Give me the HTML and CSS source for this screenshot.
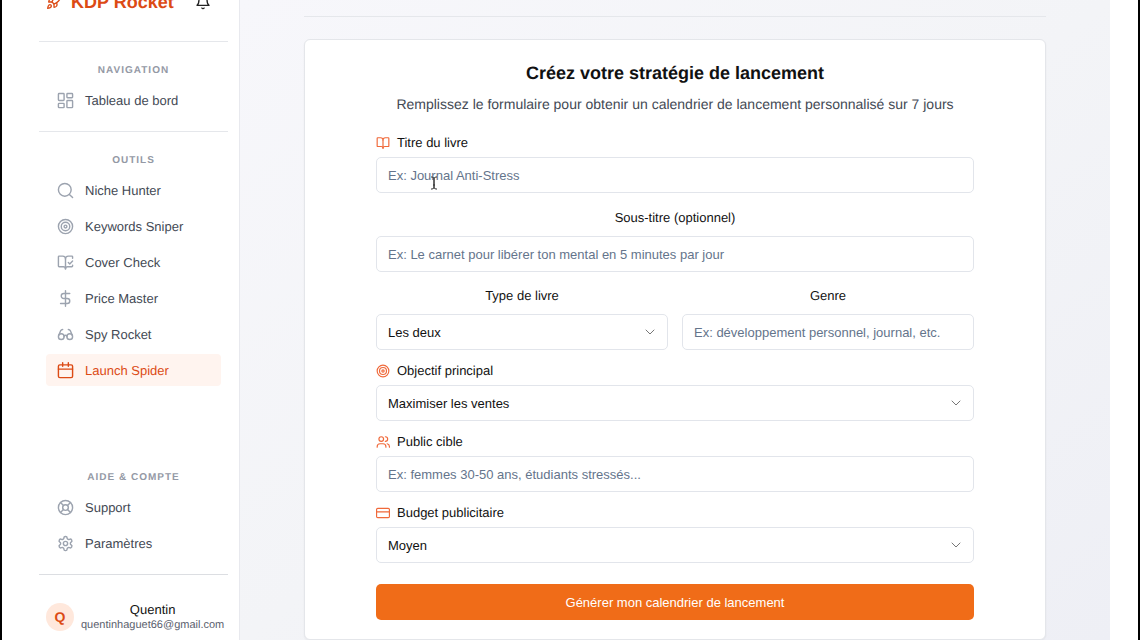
FILE: index.html
```html
<!DOCTYPE html>
<html lang="fr">
<head>
  <meta charset="UTF-8">
  <meta name="viewport" content="width=device-width, initial-scale=1">
  <title>KDP Rocket - Launch Spider</title>
  <link rel="stylesheet" href="styles.css">
</head>
<body>

<!-- Sidebar -->
<aside class="sidebar">
  <div class="brand">
    <svg class="icon brand-icon" viewBox="0 0 24 24"><path d="M4.5 16.5c-1.5 1.26-2 5-2 5s3.74-.5 5-2c.71-.84.7-2.13-.09-2.91a2.18 2.18 0 0 0-2.91-.09z"/><path d="m12 15-3-3a22 22 0 0 1 2-3.95A12.88 12.88 0 0 1 22 2c0 2.72-.78 7.5-6 11a22.35 22.35 0 0 1-4 2z"/><path d="M9 12H4s.55-3.03 2-4c1.62-1.08 5 0 5 0"/><path d="M12 15v5s3.03-.55 4-2c1.08-1.62 0-5 0-5"/></svg>
    <span class="brand-name">KDP Rocket</span>
    <button class="bell" type="button" aria-label="Notifications">
      <svg class="icon" viewBox="0 0 24 24"><path d="M6 8a6 6 0 0 1 12 0c0 7 3 9 3 9H3s3-2 3-9"/><path d="M10.3 21a1.94 1.94 0 0 0 3.4 0"/></svg>
    </button>
  </div>

  <nav class="nav-section">
    <h2 class="nav-title">NAVIGATION</h2>
    <a class="nav-link" href="#">
      <svg class="icon" viewBox="0 0 24 24"><rect x="2" y="2" width="8" height="10" rx="1"/><rect x="14" y="2" width="8" height="6" rx="1"/><rect x="14" y="12" width="8" height="10" rx="1"/><rect x="2" y="16" width="8" height="6" rx="1"/></svg>
      Tableau de bord
    </a>
  </nav>

  <nav class="nav-section">
    <h2 class="nav-title">OUTILS</h2>
    <a class="nav-link" href="#">
      <svg class="icon" viewBox="0 0 24 24"><circle cx="11" cy="11" r="9"/><path d="m22 22-4.500-4.500"/></svg>
      Niche Hunter
    </a>
    <a class="nav-link" href="#">
      <svg class="icon" viewBox="0 0 24 24"><circle cx="12" cy="12" r="10"/><circle cx="12" cy="12" r="6"/><circle cx="12" cy="12" r="2"/></svg>
      Keywords Sniper
    </a>
    <a class="nav-link" href="#">
      <svg class="icon" viewBox="0 0 24 24"><path d="M12 21V7"/><path d="m16 12 2 2 4-4"/><path d="M22 6V4a1 1 0 0 0-1-1h-5a4 4 0 0 0-4 4 4 4 0 0 0-4-4H3a1 1 0 0 0-1 1v13a1 1 0 0 0 1 1h6a3 3 0 0 1 3 3 3 3 0 0 1 3-3h6a1 1 0 0 0 1-1v-1.300"/></svg>
      Cover Check
    </a>
    <a class="nav-link" href="#">
      <svg class="icon" viewBox="0 0 24 24"><path d="M12 1v22"/><path d="M18 5H9.500a3.500 3.500 0 0 0 0 7h5a3.500 3.500 0 0 1 0 7H5"/></svg>
      Price Master
    </a>
    <a class="nav-link" href="#">
      <svg class="icon" viewBox="0 0 24 24"><circle cx="6" cy="15" r="4"/><circle cx="18" cy="15" r="4"/><path d="M14 15a2 2 0 0 0-4 0"/><path d="M2.500 13 5 7c.7-1.300 1.400-2 3-2"/><path d="M21.500 13 19 7c-.7-1.300-1.500-2-3-2"/></svg>
      Spy Rocket
    </a>
    <a class="nav-link active" href="#" aria-current="page">
      <svg class="icon" viewBox="0 0 24 24"><path d="M8 1v5M16 1v5"/><rect x="2" y="4" width="20" height="18" rx="2"/><path d="M2 10h20"/></svg>
      Launch Spider
    </a>
  </nav>

  <nav class="nav-section account">
    <h2 class="nav-title">AIDE &amp; COMPTE</h2>
    <a class="nav-link" href="#">
      <svg class="icon" viewBox="0 0 24 24"><circle cx="12" cy="12" r="10"/><circle cx="12" cy="12" r="4"/><path d="m4.930 4.930 4.240 4.240M14.830 9.170l4.240-4.240M14.830 14.830l4.240 4.240M9.170 14.830l-4.240 4.240"/></svg>
      Support
    </a>
    <a class="nav-link" href="#">
      <svg class="icon" viewBox="0 0 24 24"><path d="M12.220 2h-.44a2 2 0 0 0-2 2v.18a2 2 0 0 1-1 1.730l-.43.25a2 2 0 0 1-2 0l-.15-.08a2 2 0 0 0-2.730.73l-.22.38a2 2 0 0 0 .73 2.730l.15.1a2 2 0 0 1 1 1.720v.51a2 2 0 0 1-1 1.740l-.15.09a2 2 0 0 0-.73 2.730l.22.38a2 2 0 0 0 2.730.73l.15-.08a2 2 0 0 1 2 0l.43.25a2 2 0 0 1 1 1.730V20a2 2 0 0 0 2 2h.44a2 2 0 0 0 2-2v-.18a2 2 0 0 1 1-1.730l.43-.25a2 2 0 0 1 2 0l.15.08a2 2 0 0 0 2.730-.73l.22-.39a2 2 0 0 0-.73-2.730l-.15-.08a2 2 0 0 1-1-1.740v-.5a2 2 0 0 1 1-1.740l.15-.09a2 2 0 0 0 .73-2.730l-.22-.38a2 2 0 0 0-2.730-.73l-.15.08a2 2 0 0 1-2 0l-.43-.25a2 2 0 0 1-1-1.730V4a2 2 0 0 0-2-2z"/><circle cx="12" cy="12" r="3"/></svg>
      Paramètres
    </a>
  </nav>

  <div class="user">
    <div class="avatar">Q</div>
    <div class="user-info">
      <div class="user-name">Quentin</div>
      <div class="user-email">quentinhaguet66@gmail.com</div>
    </div>
  </div>
</aside>

<!-- Launch form -->
<main class="main">
  <div class="page-header"></div>

  <section class="card">
    <h1>Créez votre stratégie de lancement</h1>
    <p class="subtitle">Remplissez le formulaire pour obtenir un calendrier de lancement personnalisé sur 7 jours</p>

    <form class="form">
      <div class="field">
        <label class="icon-label" for="book-title">
          <svg class="icon" viewBox="0 0 24 24"><path d="M12 7v14"/><path d="M3 18a1 1 0 0 1-1-1V4a1 1 0 0 1 1-1h5a4 4 0 0 1 4 4 4 4 0 0 1 4-4h5a1 1 0 0 1 1 1v13a1 1 0 0 1-1 1h-6a3 3 0 0 0-3 3 3 3 0 0 0-3-3z"/></svg>
          Titre du livre
        </label>
        <div class="control">
          <input type="text" id="book-title" placeholder="Ex: Journal Anti-Stress">
          <svg class="text-cursor" viewBox="0 0 8 14"><path d="M1 1h1q2 0 2 2v8q0 2-2 2H1M7 1H6Q4 1 4 3v8q0 2 2 2h1M3 9h2"/></svg>
        </div>
      </div>

      <div class="field plain">
        <label for="book-subtitle">Sous-titre (optionnel)</label>
        <input type="text" id="book-subtitle" placeholder="Ex: Le carnet pour libérer ton mental en 5 minutes par jour">
      </div>

      <div class="row">
        <div class="field plain">
          <label for="book-type">Type de livre</label>
          <div class="control">
            <select id="book-type">
              <option>Les deux</option>
              <option>Broché</option>
              <option>Ebook</option>
            </select>
            <svg class="icon chevron" viewBox="0 0 24 24"><path d="m4 8 8 8 8-8"/></svg>
          </div>
        </div>
        <div class="field plain">
          <label for="genre">Genre</label>
          <input type="text" id="genre" placeholder="Ex: développement personnel, journal, etc.">
        </div>
      </div>

      <div class="field">
        <label class="icon-label" for="goal">
          <svg class="icon" viewBox="0 0 24 24"><circle cx="12" cy="12" r="10"/><circle cx="12" cy="12" r="6"/><circle cx="12" cy="12" r="2"/></svg>
          Objectif principal
        </label>
        <div class="control">
          <select id="goal">
            <option>Maximiser les ventes</option>
            <option>Obtenir des avis</option>
          </select>
          <svg class="icon chevron" viewBox="0 0 24 24"><path d="m4 8 8 8 8-8"/></svg>
        </div>
      </div>

      <div class="field">
        <label class="icon-label" for="audience">
          <svg class="icon" viewBox="0 0 24 24"><path d="M17 21v-1a5 5 0 0 0-5-5H7a5 5 0 0 0-5 5v1"/><circle cx="9" cy="7" r="4"/><path d="M23 21v-1a5 5 0 0 0-4-5"/><path d="M16 3a4 4 0 0 1 0 8"/></svg>
          Public cible
        </label>
        <input type="text" id="audience" placeholder="Ex: femmes 30-50 ans, étudiants stressés...">
      </div>

      <div class="field">
        <label class="icon-label" for="budget">
          <svg class="icon" viewBox="0 0 24 24"><rect x="1" y="4" width="22" height="16" rx="2"/><path d="M1 10h22"/></svg>
          Budget publicitaire
        </label>
        <div class="control">
          <select id="budget">
            <option>Moyen</option>
            <option>Faible</option>
            <option>Élevé</option>
          </select>
          <svg class="icon chevron" viewBox="0 0 24 24"><path d="m4 8 8 8 8-8"/></svg>
        </div>
      </div>

      <button class="submit" type="button">Générer mon calendrier de lancement</button>
    </form>
  </section>
</main>

</body>
</html>
```
FILE: styles.css
```css
* {
  box-sizing: border-box;
}
body {
  display: flex;
  min-height: 100vh;
  margin: 0;
  padding-right: 28px;
  overflow: hidden;
  background: white;
  border: solid black;
  border-width: 0 2px;
  font-family: "Liberation Sans", Arial, sans-serif;
  font-size: 13px;
  text-rendering: geometricPrecision;
  color: #111;
}
.icon {
  width: 16px;
  height: 16px;
  flex-shrink: 0;
  fill: none;
  stroke: currentColor;
  stroke-width: 2;
  stroke-linecap: round;
  stroke-linejoin: round;
}

/* Sidebar */
.sidebar {
  width: 238px;
  flex-shrink: 0;
  padding: 0 11px 0 37px;
  border-right: 1px solid #e8e9ee;
}
.brand {
  display: flex;
  align-items: center;
  margin-top: -12px;
  padding: 0 17px 25px 7px;
  line-height: 28px;
  color: #dc4a14;
}
.brand-name {
  margin-left: 9px;
  font-size: 18px;
  font-weight: bold;
}
.bell {
  display: flex;
  margin-left: auto;
  padding: 0;
  background: none;
  border: none;
  color: #222;
}
.nav-section {
  padding: 20px 7px 15px;
  border-top: 1px solid #e5e7eb;
}
.nav-title {
  margin: 0 0 4px;
  font-size: 10px;
  line-height: 18px;
  letter-spacing: 1px;
  text-align: center;
  color: #9499a5;
}
.nav-link {
  display: flex;
  align-items: center;
  gap: 11px;
  height: 32px;
  padding-left: 11px;
  border-radius: 4px;
  color: #434954;
  text-decoration: none;
}
.nav-link + .nav-link {
  margin-top: 4px;
}
.nav-link .icon {
  width: 17px;
  height: 17px;
  color: #9ca3af;
}
.nav-link.active {
  background: #fff4ef;
  color: #dc4a14;
}
.nav-link.active .icon {
  color: #dc4a14;
}
.account {
  margin-top: 48px;
  border-top: none;
}
.user {
  display: flex;
  align-items: center;
  gap: 7px;
  padding: 27px 7px 8px;
  border-top: 1px solid #dcdee2;
}
.avatar {
  width: 28px;
  height: 28px;
  flex-shrink: 0;
  border-radius: 50%;
  background: #ffe8dc;
  color: #dc4a14;
  font-size: 14px;
  font-weight: bold;
  line-height: 28px;
  text-align: center;
}
.user-info {
  text-align: center;
}
.user-name {
  line-height: 16px;
}
.user-email {
  font-size: 11px;
  line-height: 14px;
  color: #5b616e;
}

/* Main */
.main {
  flex: 1;
  padding: 0 64px;
  background: linear-gradient(to bottom right, #f7f7fb, #f3f4f7 50%, #eeeff5);
}
.page-header {
  height: 17px;
  margin-bottom: 22px;
  border-bottom: 1px solid #e5e7eb;
}
.card {
  padding: 21px 71px 19px;
  background: white;
  border: 1px solid #e4e6ea;
  border-radius: 6px;
  box-shadow: 0 1px 2px rgba(0,0,0,0.05);
}
h1 {
  margin: 0;
  font-size: 18px;
  line-height: 24px;
  text-align: center;
}
.subtitle {
  margin: 9px 0 20px;
  font-size: 14px;
  line-height: 20px;
  text-align: center;
  color: #434954;
}
.field {
  margin-bottom: 12px;
}
.field label {
  display: block;
  margin-bottom: 8px;
  line-height: 20px;
  text-align: center;
}
.field .icon-label {
  display: flex;
  align-items: center;
  gap: 7px;
  margin-bottom: 5px;
  line-height: 18px;
}
.icon-label .icon {
  width: 14px;
  height: 14px;
  color: #f0693a;
}
.plain {
  margin-top: 15px;
}
.row {
  display: grid;
  grid-template-columns: 1fr 1fr;
  gap: 14px;
}
.row .plain {
  margin-top: 2px;
}
.control {
  position: relative;
}
input, select {
  display: block;
  width: 100%;
  height: 36px;
  padding: 0 11px;
  background: white;
  border: 1px solid #e2e5eb;
  border-radius: 5px;
  font: inherit;
  color: #111;
}
select {
  appearance: none;
}
input::placeholder {
  color: #64748b;
}
.chevron {
  position: absolute;
  top: 12px;
  right: 12px;
  width: 12px;
  height: 12px;
  color: #777;
  pointer-events: none;
}
.text-cursor {
  position: absolute;
  top: 19px;
  left: 54px;
  width: 8px;
  height: 14px;
  fill: none;
  stroke: #333;
  pointer-events: none;
}
.submit {
  display: block;
  width: 100%;
  height: 36px;
  margin-top: 21px;
  background: #f06c18;
  border: none;
  border-radius: 5px;
  color: white;
  font: inherit;
  cursor: pointer;
}
```
